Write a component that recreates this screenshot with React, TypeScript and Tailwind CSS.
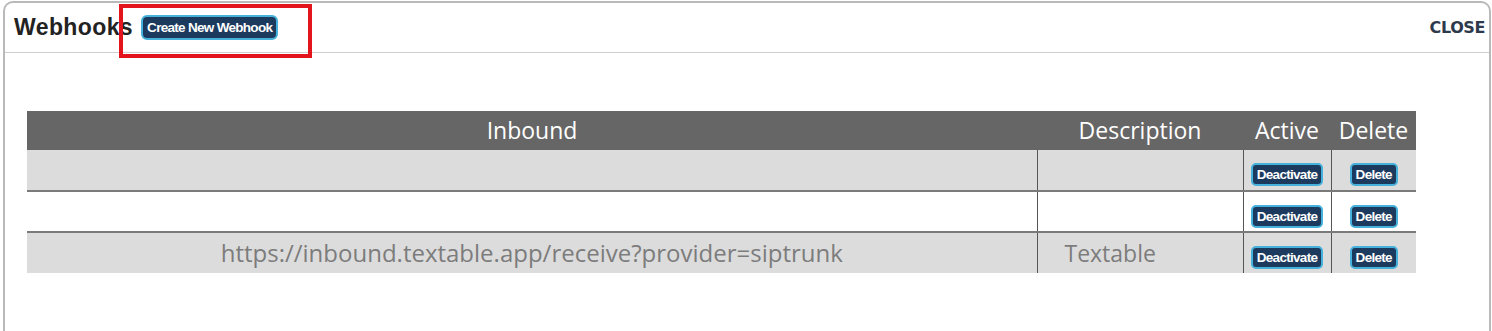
const rows = [
  { inbound: "", description: "", shaded: true },
  { inbound: "", description: "", shaded: false },
  {
    inbound: "https://inbound.textable.app/receive?provider=siptrunk",
    description: "Textable",
    shaded: true,
  },
];

function SmallButton({ label }: { label: string }) {
  return (
    <button className="h-[23px] px-[4px] rounded-[5px] border-2 border-[#46b2dc] bg-[#1c3a5e] text-white text-[13.5px] font-bold leading-none tracking-[-0.7px] font-['Liberation_Sans',sans-serif]">
      {label}
    </button>
  );
}

export default function App() {
  return (
    <div className="w-[1492px] h-[331px] bg-white overflow-hidden">
      <div className="relative ml-[3px] mt-[1px] w-[1488px] h-[340px] border-t-2 border-l-2 border-r-2 border-[#b9b9b9] rounded-t-[10px] bg-white">
        <div className="flex items-center justify-between h-[50px] border-b border-[#cfcfcf] pl-[9px] pr-[4px]">
          <div className="flex items-center gap-[8px]">
            <h1 className="text-[23px] font-bold text-[#222] tracking-[0.4px] font-['Liberation_Sans',sans-serif]">
              Webhooks
            </h1>
            <button className="h-[25px] px-[4px] rounded-[6px] border-2 border-[#46b2dc] bg-[#1c3a5e] text-white text-[13.5px] font-bold leading-none tracking-[-0.7px] font-['Liberation_Sans',sans-serif]">
              Create New Webhook
            </button>
          </div>
          <span className="text-[16px] font-bold text-[#2e3a4c] font-['DejaVu_Sans',sans-serif] tracking-[-0.4px]">
            CLOSE
          </span>
        </div>

        <div className="absolute left-[114px] top-[1px] w-[193px] h-[54px] border-[4px] border-[#e3141c]" />

        <div className="pt-[58px] pl-[22px]">
          <table className="w-[1389px] border-collapse font-['Open_Sans',sans-serif]">
            <thead>
              <tr className="h-[39px] bg-[#666666] text-white text-[23px]">
                <th className="w-[1010px] font-normal text-center">Inbound</th>
                <th className="w-[206px] font-normal text-center">Description</th>
                <th className="w-[88px] font-normal text-center">Active</th>
                <th className="w-[85px] font-normal text-center">Delete</th>
              </tr>
            </thead>
            <tbody>
              {rows.map((r, i) => (
                <tr
                  key={i}
                  className={
                    (r.shaded ? "bg-[#dcdcdc] " : "bg-white ") +
                    (i < rows.length - 1 ? "border-b-2 border-[#7a7a7a] " : "") +
                    "h-[41px] text-[#7c7c7c] text-[24px]"
                  }
                >
                  <td className="text-center border-r border-[#555]">{r.inbound}</td>
                  <td className="pl-[27px] text-left text-[23px] border-r border-[#555]">
                    {r.description}
                  </td>
                  <td className="text-center border-r border-[#555]">
                    <SmallButton label="Deactivate" />
                  </td>
                  <td className="text-center">
                    <SmallButton label="Delete" />
                  </td>
                </tr>
              ))}
            </tbody>
          </table>
        </div>
      </div>
    </div>
  );
}
